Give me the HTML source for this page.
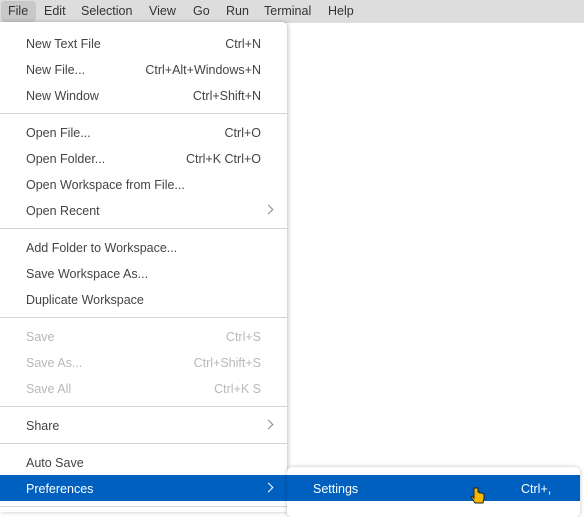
<!DOCTYPE html>
<html><head><style>
*{margin:0;padding:0;box-sizing:border-box}
body{width:584px;height:509px;overflow:hidden;background:#fff;font-family:"Liberation Sans",sans-serif;font-size:12.5px;color:#444;position:relative}
.bar{position:absolute;left:0;top:0;width:584px;height:23px;background:#dddddd}
.bar span{position:absolute;top:4px;color:#333;font-size:12.5px}
.fileh{position:absolute;left:1px;top:1px;width:35px;height:21px;background:#c8c8c8;border-radius:4px}
.menu{position:absolute;left:0;top:22px;width:287px;height:490px;background:#fff;border-radius:0 5px 0 0;box-shadow:1px 0 4px rgba(0,0,0,.25)}
.it{position:absolute;left:0;width:287px;height:26px}
.it .l{position:absolute;left:26px;top:7px}
.it .r{position:absolute;right:26px;top:7px}
.dis{color:#b8b8b8}
.sep{position:absolute;left:0;width:287px;height:1px;background:#d4d4d4}
.hl{background:#0060c0;color:#fff}
.chev{position:absolute;right:15px;top:9px;width:7px;height:7px;border-right:1px solid #888;border-top:1px solid #888;transform:rotate(45deg)}
.hl .chev{border-color:#fff}
.sub{position:absolute;left:287px;top:467px;width:293px;height:50px;background:#fff;border-radius:5px;box-shadow:0 0 4px rgba(0,0,0,.25)}
</style></head><body>
<div class="bar"><div class="fileh"></div>
<span style="left:8px">File</span><span style="left:44px">Edit</span><span style="left:81px">Selection</span><span style="left:149px">View</span><span style="left:193px">Go</span><span style="left:226px">Run</span><span style="left:264px">Terminal</span><span style="left:328px">Help</span></div>
<div class="menu">
<div class="it" style="top:8px"><span class="l">New Text File</span><span class="r">Ctrl+N</span></div>
<div class="it" style="top:34px"><span class="l">New File...</span><span class="r">Ctrl+Alt+Windows+N</span></div>
<div class="it" style="top:60px"><span class="l">New Window</span><span class="r">Ctrl+Shift+N</span></div>
<div class="sep" style="top:91px"></div>
<div class="it" style="top:97px"><span class="l">Open File...</span><span class="r">Ctrl+O</span></div>
<div class="it" style="top:123px"><span class="l">Open Folder...</span><span class="r">Ctrl+K Ctrl+O</span></div>
<div class="it" style="top:149px"><span class="l">Open Workspace from File...</span></div>
<div class="it" style="top:175px"><span class="l">Open Recent</span><span class="chev"></span></div>
<div class="sep" style="top:206px"></div>
<div class="it" style="top:212px"><span class="l">Add Folder to Workspace...</span></div>
<div class="it" style="top:238px"><span class="l">Save Workspace As...</span></div>
<div class="it" style="top:264px"><span class="l">Duplicate Workspace</span></div>
<div class="sep" style="top:295px"></div>
<div class="it dis" style="top:301px"><span class="l">Save</span><span class="r">Ctrl+S</span></div>
<div class="it dis" style="top:327px"><span class="l">Save As...</span><span class="r">Ctrl+Shift+S</span></div>
<div class="it dis" style="top:353px"><span class="l">Save All</span><span class="r">Ctrl+K S</span></div>
<div class="sep" style="top:384px"></div>
<div class="it" style="top:390px"><span class="l">Share</span><span class="chev"></span></div>
<div class="sep" style="top:421px"></div>
<div class="it" style="top:427px"><span class="l">Auto Save</span></div>
<div class="it hl" style="top:453px"><span class="l">Preferences</span><span class="chev"></span></div>
<div class="sep" style="top:484px"></div>
</div>
<div class="sub"><div class="hl" style="position:absolute;left:0;top:8px;width:293px;height:26px"><span style="position:absolute;left:26px;top:7px">Settings</span><span style="position:absolute;left:234px;top:7px">Ctrl+,</span></div></div>
<svg style="position:absolute;left:470px;top:486px" width="16" height="22" viewBox="0 0 16 22"><path d="M4 2v10l-2-2-1 1 4 6h8l1-5v-4l-2-1-2 0-2-1V2z" fill="#f5b800" stroke="#222" stroke-width="1"/></svg>
</body></html>
